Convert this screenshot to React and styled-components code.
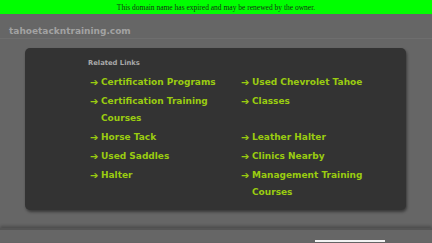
import React from 'react'
import styled, { createGlobalStyle } from 'styled-components'

const GlobalStyle = createGlobalStyle`
  html, body {
    margin: 0;
    padding: 0;
    background: #666666;
    overflow: hidden;
  }
`

const Page = styled.div`
  width: 432px;
  height: 243px;
  display: flex;
  flex-direction: column;
  background: #666666;
`

const Banner = styled.div`
  height: 14px;
  background: #00ff00;
  color: #163016;
  font-family: "Liberation Serif", serif;
  font-size: 7.5px;
  display: flex;
  align-items: center;
  justify-content: center;
`

const Header = styled.div`
  height: 25px;
  box-sizing: border-box;
  display: flex;
  align-items: center;
  padding: 9px 0 0 9px;
  border-bottom: 1px solid #6e6e6e;
  font-family: "DejaVu Sans", sans-serif;
  font-weight: bold;
  font-size: 9px;
  color: #a2a2a2;
`

const Content = styled.div`
  padding: 9px 26px 0 25px;
`

const Panel = styled.div`
  height: 162px;
  box-sizing: border-box;
  background: #333333;
  border-radius: 5px;
  box-shadow: 1px 2px 3px rgba(0, 0, 0, 0.45);
  padding: 11px 0 0 63px;
  font-family: "DejaVu Sans", sans-serif;
`

const Caption = styled.div`
  font-size: 6.8px;
  font-weight: bold;
  color: #a8a8a8;
  margin-bottom: 7px;
`

const Links = styled.div`
  display: grid;
  grid-template-columns: 151px 140px;
  row-gap: 2px;
  padding-left: 2px;
`

const Link = styled.div`
  display: flex;
  font-size: 9px;
  font-weight: bold;
  line-height: 17px;
  color: #9acc10;
`

const Arrow = styled.span`
  width: 11px;
  flex: none;
  font-size: 10px;
`

const Label = styled.span`
  max-width: 120px;
`

const Footer = styled.div`
  margin-top: 18px;
  height: 12px;
  border-top: 2px solid #555555;
  box-shadow: 0 -2px 3px rgba(0, 0, 0, 0.25);
  display: flex;
  justify-content: flex-end;
  align-items: flex-end;
  padding-right: 47px;
`

const FooterBox = styled.div`
  width: 70px;
  height: 2px;
  background: #f2f2f2;
`

const links = [
  'Certification Programs',
  'Used Chevrolet Tahoe',
  'Certification Training Courses',
  'Classes',
  'Horse Tack',
  'Leather Halter',
  'Used Saddles',
  'Clinics Nearby',
  'Halter',
  'Management Training Courses',
]

const App = () => {
  return (
    <Page>
      <GlobalStyle />
      <Banner>This domain name has expired and may be renewed by the owner.</Banner>
      <Header>tahoetackntraining.com</Header>
      <Content>
        <Panel>
          <Caption>Related Links</Caption>
          <Links>
            {links.map((l) => (
              <Link key={l}>
                <Arrow>➔</Arrow>
                <Label>{l}</Label>
              </Link>
            ))}
          </Links>
        </Panel>
      </Content>
      <Footer>
        <FooterBox />
      </Footer>
    </Page>
  )
}

export default App
